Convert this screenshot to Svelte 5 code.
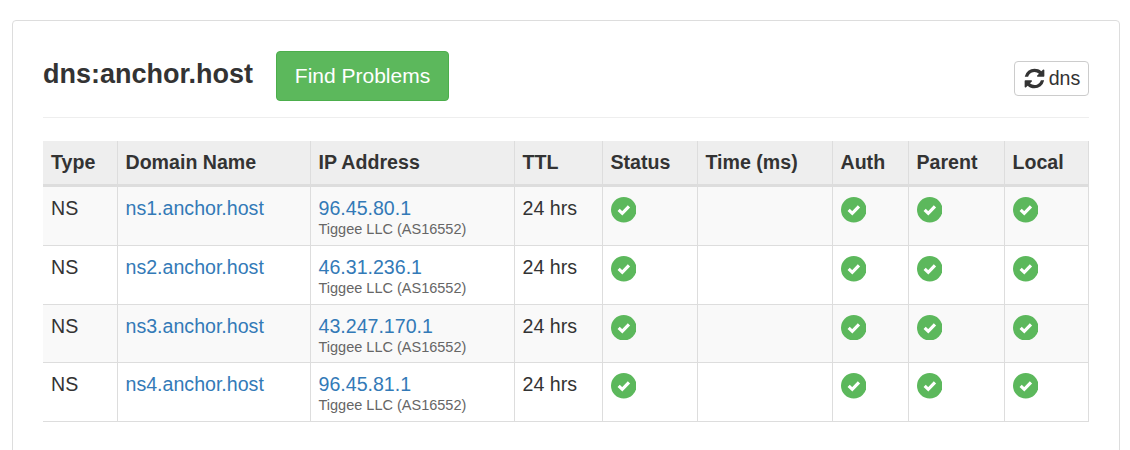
<script>
  const servers = [
    { name: 'ns1.anchor.host', ip: '96.45.80.1' },
    { name: 'ns2.anchor.host', ip: '46.31.236.1' },
    { name: 'ns3.anchor.host', ip: '43.247.170.1' },
    { name: 'ns4.anchor.host', ip: '96.45.81.1' }
  ];
  const refresh = 'M1639 1056q0 5-1 7-64 268-268 434.500t-478 166.500q-146 0-282.500-55t-243.500-157l-129 129q-19 19-45 19t-45-19-19-45v-448q0-26 19-45t45-19h448q26 0 45 19t19 45-19 45l-137 137q71 66 161 102t187 36q134 0 250-65t186-179q11-17 53-117 8-23 30-23h192q13 0 22.500 9.500t9.500 22.500zm25-800v448q0 26-19 45t-45 19h-448q-26 0-45-19t-19-45 19-45l138-138q-148-137-349-137-134 0-250 65t-186 179q-11 17-53 117-8 23-30 23h-199q-13 0-22.500-9.500t-9.500-22.500v-7q65-268 270-434.500t480-166.500q146 0 284 55.500t245 156.500l130-129q19-19 45-19t45 19 19 45z';
</script>

<div class="page">
  <div class="panel">
    <div class="head">
      <h3>dns:anchor.host</h3>
      <button type="button" class="btn-find">Find Problems</button>
      <button type="button" class="btn-refresh">
        <svg viewBox="0 0 1792 1792" width="23" height="23"><path d={refresh} fill="#333" /></svg>
        dns
      </button>
    </div>

    <table>
      <colgroup>
        <col class="c1" />
        <col class="c2" />
        <col class="c3" />
        <col class="c4" />
        <col class="c5" />
        <col class="c6" />
        <col class="c7" />
        <col class="c8" />
        <col class="c9" />
      </colgroup>
      <thead>
        <tr>
          <th>Type</th>
          <th>Domain Name</th>
          <th>IP Address</th>
          <th>TTL</th>
          <th>Status</th>
          <th>Time (ms)</th>
          <th>Auth</th>
          <th>Parent</th>
          <th>Local</th>
        </tr>
      </thead>
      <tbody>
        {#each servers as s}
          <tr>
            <td>NS</td>
            <td><a href="#top">{s.name}</a></td>
            <td>
              <a href="#top">{s.ip}</a>
              <small>Tiggee LLC (AS16552)</small>
            </td>
            <td>24 hrs</td>
            <td>{@render ok()}</td>
            <td></td>
            <td>{@render ok()}</td>
            <td>{@render ok()}</td>
            <td>{@render ok()}</td>
          </tr>
        {/each}
      </tbody>
    </table>
  </div>
</div>

{#snippet ok()}
  <svg class="ok" viewBox="0 0 24 24" width="25.5" height="25.5">
    <circle cx="12" cy="12" r="12" fill="#5cb85c" />
    <path d="M7.2 12.2l3.4 3.2 6.3-6.6" fill="none" stroke="#fff" stroke-width="3" />
  </svg>
{/snippet}

<style>
  :global(body) {
    background: #fff;
    font-family: "Liberation Sans", Arial, sans-serif;
    color: #333;
  }

  .page {
    padding: 20px 10px 0 12px;
    height: 430px;
    overflow: hidden;
  }

  .panel {
    border: 1px solid #ddd;
    border-radius: 4px;
    padding: 30px;
    height: 460px;
    box-sizing: border-box;
  }

  .head {
    display: flex;
    align-items: flex-start;
    height: 66px;
    border-bottom: 1px solid #eee;
    margin-bottom: 23px;
  }

  h3 {
    margin: 5px 23px 0 0;
    font-size: 27px;
    line-height: 36px;
    font-weight: bold;
  }

  .btn-find {
    height: 50px;
    width: 173px;
    padding: 0;
    font: 21px "Liberation Sans", Arial, sans-serif;
    color: #fff;
    background: #5cb85c;
    border: 1px solid #4cae4c;
    border-radius: 4px;
  }

  .btn-refresh {
    margin: 10px 0 0 auto;
    height: 35px;
    width: 75px;
    padding: 0;
    display: flex;
    align-items: center;
    justify-content: center;
    gap: 3px;
    font: 19.6px "Liberation Sans", Arial, sans-serif;
    color: #333;
    background: #fff;
    border: 1px solid #ccc;
    border-radius: 4px;
  }

  table {
    width: 1045px;
    table-layout: fixed;
    border-collapse: collapse;
    font-size: 19.6px;
    line-height: 1.4;
  }

  .c1 { width: 74px; }
  .c2 { width: 193px; }
  .c3 { width: 204px; }
  .c4 { width: 88px; }
  .c5 { width: 95px; }
  .c6 { width: 135px; }
  .c7 { width: 76px; }
  .c8 { width: 96px; }
  .c9 { width: 84px; }

  th, td {
    border: 1px solid #ddd;
    text-align: left;
    padding: 8px;
    vertical-align: top;
  }

  th:first-child, td:first-child { border-left: 0; }

  th {
    background: #eee;
    border-top: 0;
    border-bottom: 3px solid #ddd;
    font-weight: bold;
  }

  tbody tr:nth-child(odd) td {
    background: #f9f9f9;
  }

  a {
    color: #337ab7;
    text-decoration: none;
  }

  small {
    display: block;
    padding-top: 0.5px;
    font-size: 14.5px;
    line-height: 13.75px;
    color: #666;
  }

  .ok {
    display: block;
    margin-top: 2px;
  }
</style>
